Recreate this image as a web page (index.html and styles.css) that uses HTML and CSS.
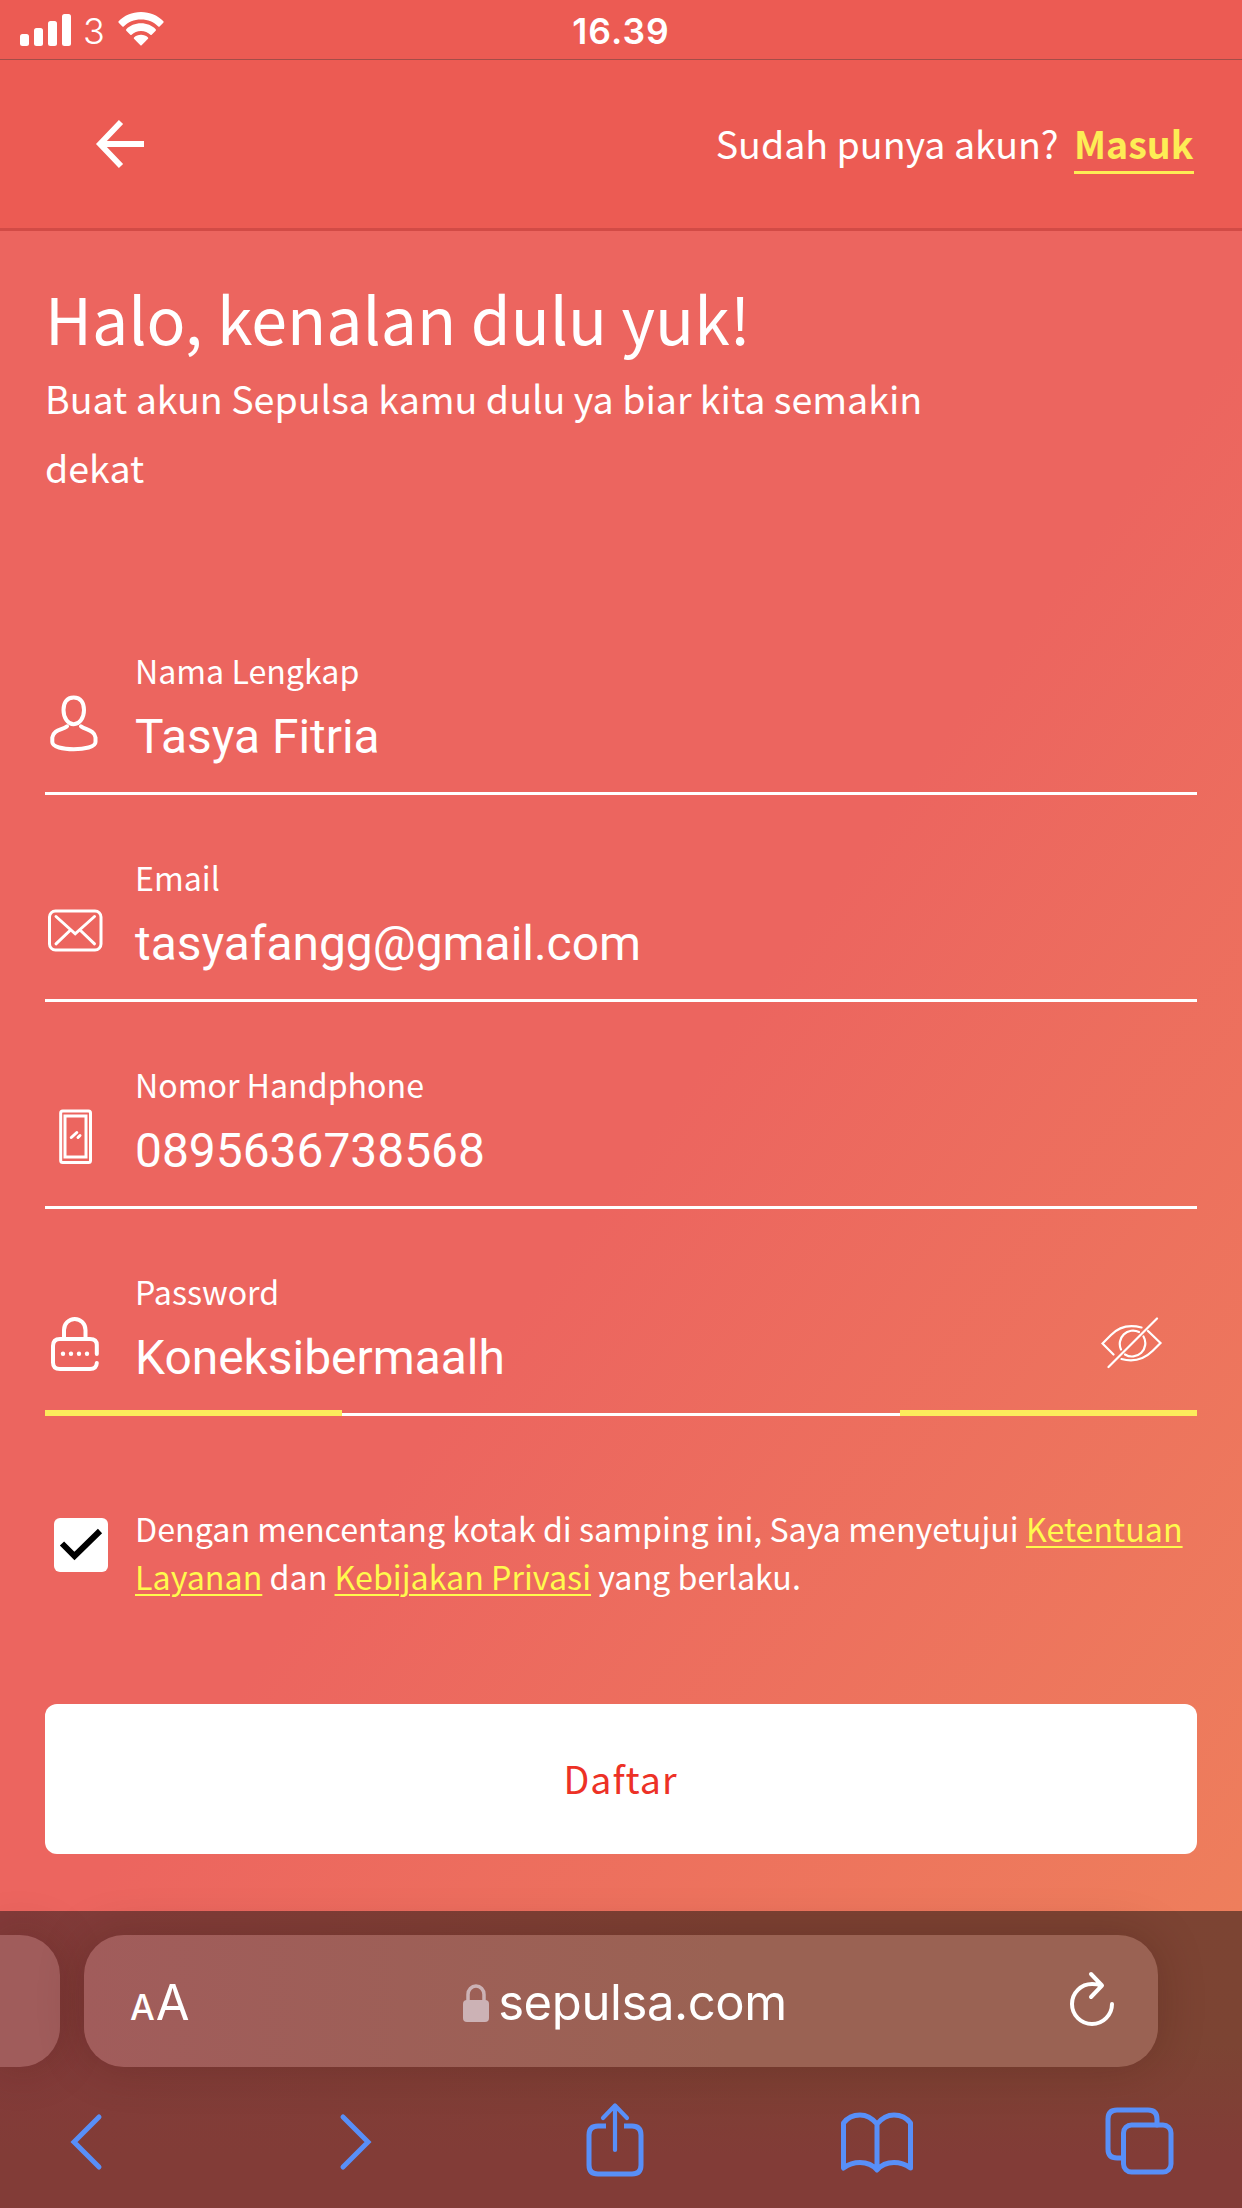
FILE: index.html
```html
<!DOCTYPE html>
<html lang="id">
<head>
<meta charset="utf-8">
<meta name="viewport" content="width=device-width">
<title>Daftar - Sepulsa</title>
<link rel="stylesheet" href="styles.css">
</head>
<body>
<div class="screen">
  <div class="status">
    <div class="status-side">
      <svg class="signal" width="52" height="33" viewBox="0 0 52 33" fill="#fff"><rect x="0" y="21" width="9" height="12" rx="2.5"/><rect x="14" y="15" width="9" height="18" rx="2.5"/><rect x="28" y="8" width="9" height="25" rx="2.5"/><rect x="42" y="1" width="9" height="32" rx="2.5"/></svg>
      <span class="carrier">3</span>
      <svg class="wifi" width="46" height="34" viewBox="0 0 46 34" fill="#fff"><path d="M23 0C14 0 6 3.600 .600 9.200Q0 10 .700 10.700L4.400 14.500Q5 15 5.700 14.500C10 10 16 7.500 23 7.500S36 10 40.300 14.500Q41 15 41.600 14.500L45.300 10.700Q46 10 45.400 9.200C40 3.600 32 0 23 0Z"/><path d="M23 11.300C17.200 11.300 12 13.500 8.300 17.200Q7.700 18 8.300 18.700L12.300 22.700Q13 23.200 13.600 22.700C16 20.300 19.300 18.900 23 18.900S30 20.300 32.400 22.700Q33 23.200 33.700 22.700L37.700 18.700Q38.300 18 37.700 17.200C34 13.500 28.800 11.300 23 11.300Z"/><path d="M23 22.700C20.200 22.700 17.800 23.700 16 25.400Q15.500 26.100 16 26.700L22.400 33.200Q23 33.700 23.600 33.200L30 26.700Q30.500 26.100 30 25.400C28.200 23.700 25.800 22.700 23 22.700Z"/></svg>
    </div>
    <span class="clock">16.39</span>
    <div class="status-side"></div>
  </div>
  <header class="header">
    <a class="back"><svg width="50" height="50" viewBox="0 0 50 50" fill="none" stroke="#fff" stroke-width="5.800"><path d="M49 26H7M26 4L5 26L26 48"/></svg></a>
    <div class="login"><span class="login-text">Sudah punya akun?</span><a class="login-link">Masuk</a></div>
  </header>
  <main class="main">
    <h1 class="title">Halo, kenalan dulu yuk!</h1>
    <p class="subtitle">Buat akun Sepulsa kamu dulu ya biar kita semakin dekat</p>
    <form class="form">
      <div class="field">
        <svg class="field-icon" viewBox="0 0 60 70" fill="none" stroke="#fff" stroke-width="4" stroke-linecap="round"><path d="M28.700 9.500C21.500 9.500 18.500 15 18.500 22C18.500 30 23 36.200 28.700 36.200S39 30 39 22C39 15 36 9.500 28.700 9.500Z"/><path d="M22 38.300C17 42 8.500 41.500 7.300 49.500V54C7.300 59 18 61.200 28.700 61.200S50.500 59 50.500 54V49.500C49.500 42 41 42 36 38.300"/></svg>
        <div class="field-body"><span class="label">Nama Lengkap</span><span class="value">Tasya Fitria</span></div>
      </div>
      <div class="field">
        <svg class="field-icon" viewBox="0 0 60 70" fill="none" stroke="#fff" stroke-width="3" stroke-linecap="round"><rect x="4.500" y="16" width="51.500" height="39" rx="6"/><path d="M11 21.500L30.200 38.800L49.500 21.500M25.500 35L11 48.800M35 35L49.500 48.800"/></svg>
        <div class="field-body"><span class="label">Email</span><span class="value">tasyafangg@gmail.com</span></div>
      </div>
      <div class="field">
        <svg class="field-icon" viewBox="0 0 60 70" fill="none" stroke="#fff" stroke-width="3" stroke-linecap="round"><rect x="15.700" y="9" width="29.800" height="51.500" rx="2"/><rect x="20" y="14" width="21" height="41"/><path d="M26.300 35.500L31.800 30.500M33 35.500L35 33.500"/></svg>
        <div class="field-body"><span class="label">Nomor Handphone</span><span class="value">0895636738568</span></div>
      </div>
      <div class="field field-active">
        <svg class="field-icon" viewBox="0 0 60 70" fill="none" stroke="#fff" stroke-width="4" stroke-linecap="round"><path d="M19 29V21A10.700 11 0 0 1 40.500 21V29M51.800 45V36Q51.800 30 45 30H15Q8 30 8 37V53.500Q8 60 15 60H45Q51.500 60 51.800 54"/><g fill="#fff" stroke="none"><circle cx="18" cy="44.700" r="2.200"/><circle cx="26" cy="44.700" r="2.200"/><circle cx="34" cy="44.700" r="2.200"/><circle cx="42" cy="44.700" r="2.200"/></g></svg>
        <div class="field-body"><span class="label">Password</span><span class="value">Koneksibermaalh</span></div>
        <svg class="eye" width="62" height="52" viewBox="0 0 62 52" fill="none" stroke="#fff" stroke-width="2.200" stroke-linecap="round"><path d="M56 1.500L7.500 50M12.500 37.500L1.500 26.500L10 18Q22 5.500 40.500 10.500M47 14L59.500 26L51.500 34Q38 47 20.500 42M20 32.500A13.300 13.300 0 0 1 38 15M42.500 19.500A13.300 13.300 0 0 1 24 37.500"/></svg>
      </div>
      <div class="terms">
        <span class="checkbox"><svg width="54" height="54" viewBox="0 0 54 54" fill="none" stroke="#000" stroke-width="6"><path d="M8 25.500L20.500 38L46 13"/></svg></span>
        <p class="terms-text">Dengan mencentang kotak di samping ini, Saya menyetujui <a>Ketentuan Layanan</a> dan <a>Kebijakan Privasi</a> yang berlaku.</p>
      </div>
      <button class="submit" type="button">Daftar</button>
    </form>
  </main>
  <footer class="browser">
    <div class="tabs">
      <div class="tab-prev"></div>
      <div class="address">
        <span class="text-size"><span class="small-a">A</span><span class="large-a">A</span></span>
        <span class="domain"><svg width="26" height="38" viewBox="0 0 26 38"><path d="M5 18V10.500a8 8.500 0 0 1 16 0V18" fill="none" stroke="#ccb2b5" stroke-width="3.500"/><rect y="16" width="26" height="22" rx="4" fill="#ccb2b5"/></svg><span>sepulsa.com</span></span>
        <svg class="reload" width="46" height="56" viewBox="0 0 46 56" fill="none" stroke="#fff" stroke-width="4" stroke-linecap="round" stroke-linejoin="round"><path d="M43 33A20 20 0 1 1 23 13C26 13 29 13.300 32 14.500M22 3L33 14.500L22 26"/></svg>
      </div>
    </div>
    <nav class="tools">
      <svg width="34" height="58" viewBox="0 0 34 58"><path d="M30 4L5 29L30 54"/></svg>
      <svg width="34" height="58" viewBox="0 0 34 58"><path d="M4 4L29 29L4 54"/></svg>
      <svg class="share" width="58" height="76" viewBox="0 0 58 76"><path stroke-linecap="butt" d="M20 24H12Q3 24 3 33V63Q3 72 12 72H46Q55 72 55 63V33Q55 24 46 24H38"/><path d="M29 5V48M17 16L29 3.500L41 16" stroke-width="4.200" stroke-linejoin="round"/></svg>
      <svg width="72" height="62" viewBox="0 0 72 62"><path stroke-linejoin="round" d="M2.500 57V12C7 6 12 4 19 4S31 7 36 13C41 7 46 4 53 4S65 6 69.500 12V57C64 53 59 51.500 53 51.500S41 53 36 59C31 53 26 51.500 19 51.500S8 53 2.500 57ZM36 13V58"/></svg>
      <svg width="70" height="70" viewBox="0 0 70 70"><path d="M52 18V12Q52 3 43 3H12Q3 3 3 12V42Q3 51 12 51H18"/><rect x="18.500" y="18" width="47.500" height="47" rx="8"/></svg>
    </nav>
  </footer>
</div>
</body>
</html>
```
FILE: styles.css
```css
* { box-sizing: border-box; }
body { margin: 0; font-family: "Noto Sans CJK SC", "Noto Sans", sans-serif; color: #fff; }
svg { display: block; flex: none; }
.screen { width: 1242px; height: 2208px; display: flex; flex-direction: column; overflow: hidden; }

.status { height: 60px; background: #ec5b53; border-bottom: 1px solid #a34d48; display: flex; font-family: Inter, sans-serif; }
.status-side { flex: 1; display: flex; padding-left: 20px; }
.signal { margin-top: 13px; }
.carrier { font-size: 36px; font-weight: 300; line-height: 62px; margin-left: 11px; width: 35px; }
.wifi { margin-top: 12px; }
.clock { font-size: 35.5px; font-weight: 600; line-height: 63px; letter-spacing: 1px; }

.header { height: 171px; background: #ec5b53; border-bottom: 3px solid #d24b46; display: flex; justify-content: space-between; padding: 55px 48px 0 95px; }
.back { padding-top: 3px; }
.login { display: flex; align-items: flex-start; font-size: 37.6px; line-height: 56px; }
.login-text { margin-right: 15px; }
.login-link { color: #fded55; font-weight: 700; border-bottom: 3px solid #fded55; padding: 0 .5px; }

.main { height: 1680px; padding: 46px 45px 0; background: linear-gradient(to bottom right, #ec655f 53%, #ee7e5c 100%); }
.title { margin: 0; font-size: 64.4px; line-height: 80px; font-weight: 400; }
.subtitle { margin: 6px 0 0; width: 900px; font-size: 37.6px; line-height: 69px; }
.form { margin-top: 87px; }
.field { height: 207px; display: flex; border-bottom: 3px solid #fff; position: relative; }
.field-icon { width: 60px; height: 70px; margin: 100px 30px 0 0; }
.field-body { flex: 1; display: flex; flex-direction: column; gap: 15px; padding-top: 60px; }
.label { font-size: 32.15px; line-height: 44px; }
.value { font-family: Roboto, sans-serif; font-size: 47.9px; line-height: 60px; }
.eye { margin: 108px 34px 0 0; }
.field-active::after { content: ""; position: absolute; left: 0; right: 0; bottom: -3px; height: 6px; background: linear-gradient(90deg, #fceb5c 297px, transparent 297px 855px, #fceb5c 855px); }
.terms { display: flex; padding: 88px 0 0 9px; }
.checkbox { width: 54px; height: 54px; margin: 14px 27px 0 0; background: #fff; border-radius: 6px; }
.terms-text { margin: 0; flex: 1; font-size: 32.22px; line-height: 48px; }
.terms-text a { color: #fffa4d; text-decoration: underline; text-decoration-thickness: 2px; text-underline-offset: 4px; }
.submit { display: block; width: 100%; height: 150px; margin-top: 104px; padding: 0 1px 3px 0; border: 0; border-radius: 12px; background: #fff; color: #ed3126; font: 400 37.6px/56px "Noto Sans CJK SC", sans-serif; letter-spacing: 1px; }

.browser { height: 297px; padding-top: 24px; background: linear-gradient(rgba(130,60,56,0) 45%, #823c37 82%), linear-gradient(90deg, #833b3a, #7c4133 60%, #7c4433); font-family: Inter, sans-serif; }
.tabs { display: flex; gap: 24px; }
.tab-prev { width: 60px; height: 132px; border-radius: 0 40px 40px 0; background: #a05c5b; box-shadow: 0 0 45px rgba(60,20,10,.25); }
.address { width: 1074px; height: 132px; border-radius: 40px; background: linear-gradient(90deg, #a15c5b, #9a6253 60%, #9a6253); box-shadow: 0 0 45px rgba(60,20,10,.25); display: grid; grid-template-columns: 1fr auto 1fr; align-items: center; padding: 0 43px 0 46px; }
.text-size { display: flex; align-items: baseline; gap: 1px; line-height: 60px; padding-top: 8px; }
.small-a { font-size: 35px; font-weight: 500; }
.large-a { font-size: 49px; }
.domain { display: flex; align-items: center; gap: 9px; padding: 3px 0 0 5px; font-size: 49px; line-height: 60px; letter-spacing: -.4px; }
.reload { justify-self: end; margin-top: -4px; }
.tools { display: grid; grid-template-columns: 270px 247px 255px 264px 70px; align-items: center; padding: 37px 0 0 69px; }
.tools svg { fill: none; stroke: #588ff8; stroke-width: 5; stroke-linecap: round; }
.tools .share { margin: -2px 0 2px; }
```
